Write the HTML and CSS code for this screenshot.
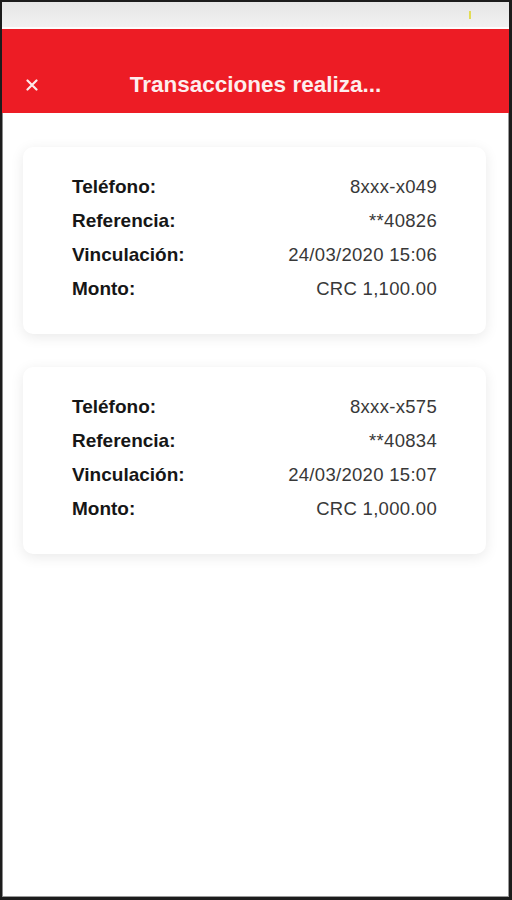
FILE: index.html
```html
<!DOCTYPE html>
<html lang="es">
<head>
    <meta charset="UTF-8">
    <title>Transacciones realizadas</title>
    <link rel="stylesheet" href="styles.css">
</head>
<body>
    <div class="device">
        <!-- Status bar -->
        <div class="status-bar">
            <span class="battery"></span>
        </div>

        <!-- Header -->
        <div class="header">
            <div class="header-row">
                <button class="close" aria-label="Cerrar">
                    <svg width="12" height="12" viewBox="0 0 12 12">
                        <path d="M1.5 1.5 L10.5 10.5 M10.5 1.5 L1.5 10.5" stroke="#fde9ea" stroke-width="2.2" stroke-linecap="round"/>
                    </svg>
                </button>
                <h1 class="title">Transacciones realiza...</h1>
            </div>
        </div>

        <!-- Transactions list -->
        <div class="list">
            <div class="card">
                <div class="row"><span class="label">Teléfono:</span><span class="value">8xxx-x049</span></div>
                <div class="row"><span class="label">Referencia:</span><span class="value">**40826</span></div>
                <div class="row"><span class="label">Vinculación:</span><span class="value">24/03/2020 15:06</span></div>
                <div class="row"><span class="label">Monto:</span><span class="value">CRC 1,100.00</span></div>
            </div>

            <div class="card">
                <div class="row"><span class="label">Teléfono:</span><span class="value">8xxx-x575</span></div>
                <div class="row"><span class="label">Referencia:</span><span class="value">**40834</span></div>
                <div class="row"><span class="label">Vinculación:</span><span class="value">24/03/2020 15:07</span></div>
                <div class="row"><span class="label">Monto:</span><span class="value">CRC 1,000.00</span></div>
            </div>
        </div>
    </div>
</body>
</html>
```

FILE: styles.css
```css
* {
    box-sizing: border-box;
}

body {
    margin: 0;
    padding: 0;
    background-color: #1a1a1a;
    font-family: "Liberation Sans", Arial, sans-serif;
}

.device {
    height: 900px;
    background-color: #fff;
    border-style: solid;
    border-color: #1c1c1c;
    border-width: 2px 3px 3px 2px;
    box-shadow: inset 1px 0 0 #8a8a8a, inset -1px -1px 0 #9a9a9a;
    overflow: hidden;
}

/* Status bar */
.status-bar {
    height: 27px;
    background: linear-gradient(#e6e6e6, #f1f1f1);
    border-bottom: 2px solid #fdfdfd;
    display: flex;
    justify-content: flex-end;
    align-items: flex-start;
    padding: 9px 38px 0 0;
}

.battery {
    width: 2px;
    height: 8px;
    background-color: #e2dc55;
}

/* Header */
.header {
    background-color: #ed1c25;
    padding-top: 28px;
}

.header-row {
    height: 56px;
    display: flex;
    align-items: center;
    position: relative;
}

.close {
    background: none;
    border: none;
    padding: 0;
    margin-left: 24px;
    width: 12px;
    height: 12px;
    display: flex;
    cursor: pointer;
}

.title {
    position: absolute;
    left: 0;
    right: 0;
    margin: 0;
    text-align: center;
    color: #fdeeee;
    font-size: 22.5px;
    font-weight: bold;
    pointer-events: none;
}

/* Cards */
.list {
    padding: 34px 23px 0 21px;
    display: flex;
    flex-direction: column;
    gap: 33px;
}

.card {
    background-color: #fff;
    border-radius: 10px;
    box-shadow: 0 3px 14px rgba(0, 0, 0, 0.09);
    padding: 23px 49px 28px 49px;
}

.row {
    display: flex;
    justify-content: space-between;
    align-items: center;
    height: 34px;
}

.label {
    font-size: 19px;
    font-weight: bold;
    color: #161616;
}

.value {
    font-size: 18.5px;
    color: #383838;
    letter-spacing: 0.3px;
}
```
